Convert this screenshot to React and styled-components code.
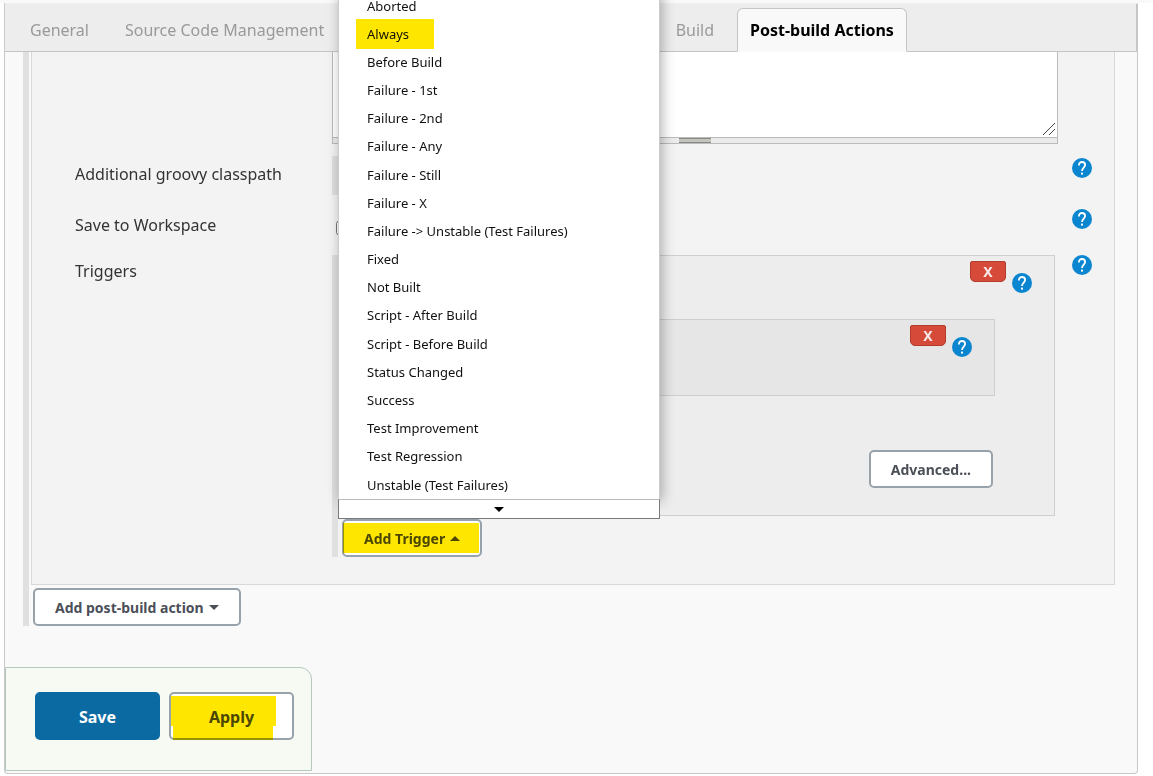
import React from "react";
import styled, { createGlobalStyle, css } from "styled-components";

const GlobalStyle = createGlobalStyle`
  *, *::before, *::after { box-sizing: border-box; }
  body {
    margin: 0;
    background: #fff;
    color: #333;
    font-family: "Noto Sans", "Open Sans", sans-serif;
    font-size: 16px;
  }
  button, input, textarea { font-family: inherit; }
`;

const Page = styled.div`
  border-top: 3px solid #f9f9f9;
  padding: 0 15px 2px 4px;
`;

const Frame = styled.main`
  background: #f9f9f9;
  border: 1px solid #c8c8c8;
  border-top-color: #eee;
  border-radius: 0 0 4px 4px;
`;

const TabBar = styled.nav`
  display: flex;
  align-items: flex-end;
  gap: 10px;
  height: 48px;
  padding-left: 12px;
  background: #ededed;
  border-bottom: 1px solid #c5c5c5;
  border-right: 1px solid #c5c5c5;
`;

const Tab = styled.a`
  height: 44px;
  margin-bottom: -1px;
  padding: 0 12px;
  border: 1px solid transparent;
  border-radius: 6px 6px 0 0;
  line-height: 42px;
  white-space: nowrap;
  text-decoration: none;
  color: #999;
  ${(p) =>
    p.$active &&
    css`
      color: #000;
      font-weight: 700;
      background: #f9f9f9;
      border-color: #c5c5c5;
      border-bottom-color: #f9f9f9;
    `}
`;

const Content = styled.form`
  margin: 0;
  padding: 0 22px 2px 0;
`;

const Repeatable = styled.div`
  border-left: 6px solid #e0e0e0;
  padding-left: 2px;
`;

const PostBuildSection = styled(Repeatable)`
  margin-left: 18px;
`;

const Panel = styled.section`
  display: flex;
  flex-direction: column;
  gap: 12px;
  padding: 0 22px 27px 43px;
  background: #f3f3f3;
  border: 1px solid #d8d8d8;
  border-top: 0;
`;

const Row = styled.div`
  display: flex;
  align-items: flex-start;
  min-height: ${(p) => p.$min || 0}px;
`;

const Label = styled.label`
  flex: 0 0 257px;
  padding-top: 7px;
  line-height: 22px;
`;

const Field = styled.div`
  flex: 1;
  min-width: 0;
  padding-top: ${(p) => p.$top || 0}px;
`;

const HelpSlot = styled.div`
  flex: 0 0 34px;
  padding: 2px 0 0 14px;
`;

const HelpButton = styled.button`
  display: block;
  width: 20px;
  height: 20px;
  padding: 0;
  border: 0;
  background: none;
`;

const ScriptWrap = styled.div`
  position: relative;
  > svg {
    position: absolute;
    right: 3px;
    bottom: 3px;
    pointer-events: none;
  }
`;

const ScriptArea = styled.textarea`
  display: block;
  width: 100%;
  height: 86px;
  border: 1px solid #bbb;
  border-top: 0;
  background: #fff;
  resize: none;
`;

const ResizeStrip = styled.div`
  display: flex;
  justify-content: center;
  height: 6px;
  background: #ebebeb;
  border: 1px solid #bbb;
  border-top: 0;
`;

const ResizeGrip = styled.span`
  width: 32px;
  height: 5px;
  background: #c4c4bf;
  border: solid #8a8a85;
  border-width: 1px 0;
`;

const PathList = styled(Repeatable)`
  height: 39px;
`;

const Checkbox = styled.input`
  display: block;
  width: 14px;
  height: 14px;
  margin: 0 0 0 4px;
`;

const TriggerBox = styled.div`
  margin-right: ${(p) => (p.$nested ? 0 : 3)}px;
  height: ${(p) => (p.$nested ? "77px" : "auto")};
  background: ${(p) => (p.$nested ? "#e6e6e6" : "#ededed")};
  border: 1px solid #cfcfcf;
`;

const BoxHeader = styled.header`
  display: flex;
  justify-content: flex-end;
  align-items: flex-start;
  gap: 6px;
  height: 63px;
  padding: 5px 22px 0 0;
  ${HelpButton} { margin-top: 12px; }
`;

const BoxBody = styled.div`
  padding: 0 59px 0 29px;
`;

const BoxActions = styled.div`
  display: flex;
  justify-content: flex-end;
  padding: 54px 61px 27px 0;
`;

const DeleteButton = styled.button`
  width: 36px;
  height: 21px;
  padding: 0;
  border: 1px solid #b43c2c;
  border-radius: 2px 2px 5px 5px;
  background: #d54a38;
  color: #f8eae8;
  font-size: 14px;
  font-weight: 700;
  line-height: 20px;
`;

const Button = styled.button`
  position: relative;
  display: inline-flex;
  align-items: center;
  justify-content: center;
  gap: 5px;
  height: 38px;
  padding: 1px 20px 0;
  border: 2px solid #98a2ab;
  border-radius: 5px;
  background: #fff;
  color: #4b4f58;
  font-size: 14px;
  font-weight: 700;
  white-space: nowrap;
`;

const LargeButton = styled(Button)`
  width: 125px;
  height: 48px;
  font-size: 16px;
  ${(p) =>
    p.$primary &&
    css`
      background: #0b6aa2;
      border-color: #0b6aa2;
      color: #fff;
    `}
`;

const Marker = styled.span`
  position: absolute;
  inset: ${(p) => p.$inset};
  background: #ffe600;
  mix-blend-mode: multiply;
  pointer-events: none;
`;

const Caret = styled.span`
  border: 5px solid transparent;
  ${(p) =>
    p.$up
      ? "border-top: 0; border-bottom-color: currentColor;"
      : "border-bottom: 0; border-top-color: currentColor;"}
`;

const MenuAnchor = styled.div`
  position: relative;
  display: flex;
  padding: 3px 0 0 2px;
`;

const Menu = styled.div`
  position: absolute;
  z-index: 2;
  left: -2px;
  bottom: 38px;
  width: 322px;
`;

const MenuList = styled.ul`
  display: flex;
  flex-direction: column;
  height: 508px;
  margin: 0;
  padding: 0;
  list-style: none;
  background: #fff;
  border: 1px solid #ccc;
  border-bottom: 0;
  box-shadow: 2px 2px 12px rgba(0, 0, 0, 0.3);
`;

const MenuItem = styled.li`
  position: relative;
  flex: 1;
  display: flex;
  align-items: center;
  padding-left: 28px;
`;

const MenuLink = styled.a`
  color: #111;
  font-size: 13px;
  line-height: 21px;
  text-decoration: none;
`;

const ScrollDown = styled.button`
  position: relative;
  display: flex;
  align-items: center;
  justify-content: center;
  width: 100%;
  height: 20px;
  padding: 0;
  border: 1px solid #7a7a7a;
  border-top-color: #bbb;
  background: #fff;
  color: #000;
`;

const AddAction = styled.div`
  display: flex;
  padding: 3px 0 0 2px;
`;

const SaveBar = styled.footer`
  display: inline-flex;
  gap: 9px;
  margin-top: 41px;
  padding: 24px 17px 30px 29px;
  vertical-align: top;
  background: #f6faf3;
  border: 1px solid #b4c8bf;
  border-radius: 0 12px 0 0;
`;

function Help({ topic }) {
  return (
    <HelpButton type="button" aria-label={`Help: ${topic}`}>
      <svg width="20" height="20" viewBox="0 0 20 20" aria-hidden="true">
        <circle cx="10" cy="10" r="10" fill="#0a86d1" />
        <path
          d="M6.9 7.4 C6.9 5.4 8.2 4 10 4 C11.9 4 13.1 5.3 13.1 7 C13.1 9.4 10 9.8 10 13"
          fill="none"
          stroke="#fff"
          strokeWidth="1.8"
        />
        <rect x="9" y="14.6" width="2" height="2" fill="#fff" />
      </svg>
    </HelpButton>
  );
}

const tabs = [
  "General",
  "Source Code Management",
  "Build Triggers",
  "Build Environment",
  "Build",
  "Post-build Actions",
];

const triggers = [
  "Aborted",
  "Always",
  "Before Build",
  "Failure - 1st",
  "Failure - 2nd",
  "Failure - Any",
  "Failure - Still",
  "Failure - X",
  "Failure -> Unstable (Test Failures)",
  "Fixed",
  "Not Built",
  "Script - After Build",
  "Script - Before Build",
  "Status Changed",
  "Success",
  "Test Improvement",
  "Test Regression",
  "Unstable (Test Failures)",
];

function TriggerMenu() {
  return (
    <Menu>
      <MenuList>
        {triggers.map((name) => (
          <MenuItem key={name}>
            <MenuLink href="#">{name}</MenuLink>
            {name === "Always" && <Marker $inset="-1px 225px -1px 17px" />}
          </MenuItem>
        ))}
      </MenuList>
      <ScrollDown type="button" aria-label="Scroll down">
        <Caret />
      </ScrollDown>
    </Menu>
  );
}

export default function App() {
  return (
    <Page>
      <GlobalStyle />
      <Frame>
        <TabBar>
          {tabs.map((name) => (
            <Tab key={name} href="#" $active={name === "Post-build Actions"}>
              {name}
            </Tab>
          ))}
        </TabBar>
        <Content>
          <PostBuildSection>
            <Panel>
              <Row>
                <Label htmlFor="script" />
                <Field>
                  <ScriptWrap>
                    <ScriptArea id="script" aria-label="Script" />
                    <svg width="12" height="12" viewBox="0 0 12 12" aria-hidden="true">
                      <path d="M0 12 L12 0 M6 12 L12 6" stroke="#444" strokeWidth="1" />
                    </svg>
                  </ScriptWrap>
                  <ResizeStrip>
                    <ResizeGrip />
                  </ResizeStrip>
                </Field>
                <HelpSlot />
              </Row>
              <Row $min={39}>
                <Label as="div">Additional groovy classpath</Label>
                <Field>
                  <PathList />
                </Field>
                <HelpSlot>
                  <Help topic="Additional groovy classpath" />
                </HelpSlot>
              </Row>
              <Row $min={34}>
                <Label htmlFor="save-ws">Save to Workspace</Label>
                <Field $top={14}>
                  <Checkbox id="save-ws" type="checkbox" />
                </Field>
                <HelpSlot>
                  <Help topic="Save to Workspace" />
                </HelpSlot>
              </Row>
              <Row>
                <Label as="div">Triggers</Label>
                <Field $top={2}>
                  <Repeatable>
                    <TriggerBox>
                      <BoxHeader>
                        <DeleteButton type="button">X</DeleteButton>
                        <Help topic="Trigger" />
                      </BoxHeader>
                      <BoxBody>
                        <TriggerBox $nested>
                          <BoxHeader>
                            <DeleteButton type="button">X</DeleteButton>
                            <Help topic="Recipients" />
                          </BoxHeader>
                        </TriggerBox>
                      </BoxBody>
                      <BoxActions>
                        <Button type="button">Advanced...</Button>
                      </BoxActions>
                    </TriggerBox>
                    <MenuAnchor>
                      <Button type="button" aria-expanded="true">
                        Add Trigger <Caret $up />
                        <Marker $inset="2px 1px 2px -1px" />
                      </Button>
                      <TriggerMenu />
                    </MenuAnchor>
                  </Repeatable>
                </Field>
                <HelpSlot>
                  <Help topic="Triggers" />
                </HelpSlot>
              </Row>
            </Panel>
            <AddAction>
              <Button type="button">
                Add post-build action <Caret />
              </Button>
            </AddAction>
          </PostBuildSection>
          <SaveBar>
            <LargeButton type="submit" $primary>
              Save
            </LargeButton>
            <LargeButton type="button">
              Apply
              <Marker $inset="2px 16px 12px 0" />
              <Marker $inset="32px 19px -2px 2px" />
            </LargeButton>
          </SaveBar>
        </Content>
      </Frame>
    </Page>
  );
}
